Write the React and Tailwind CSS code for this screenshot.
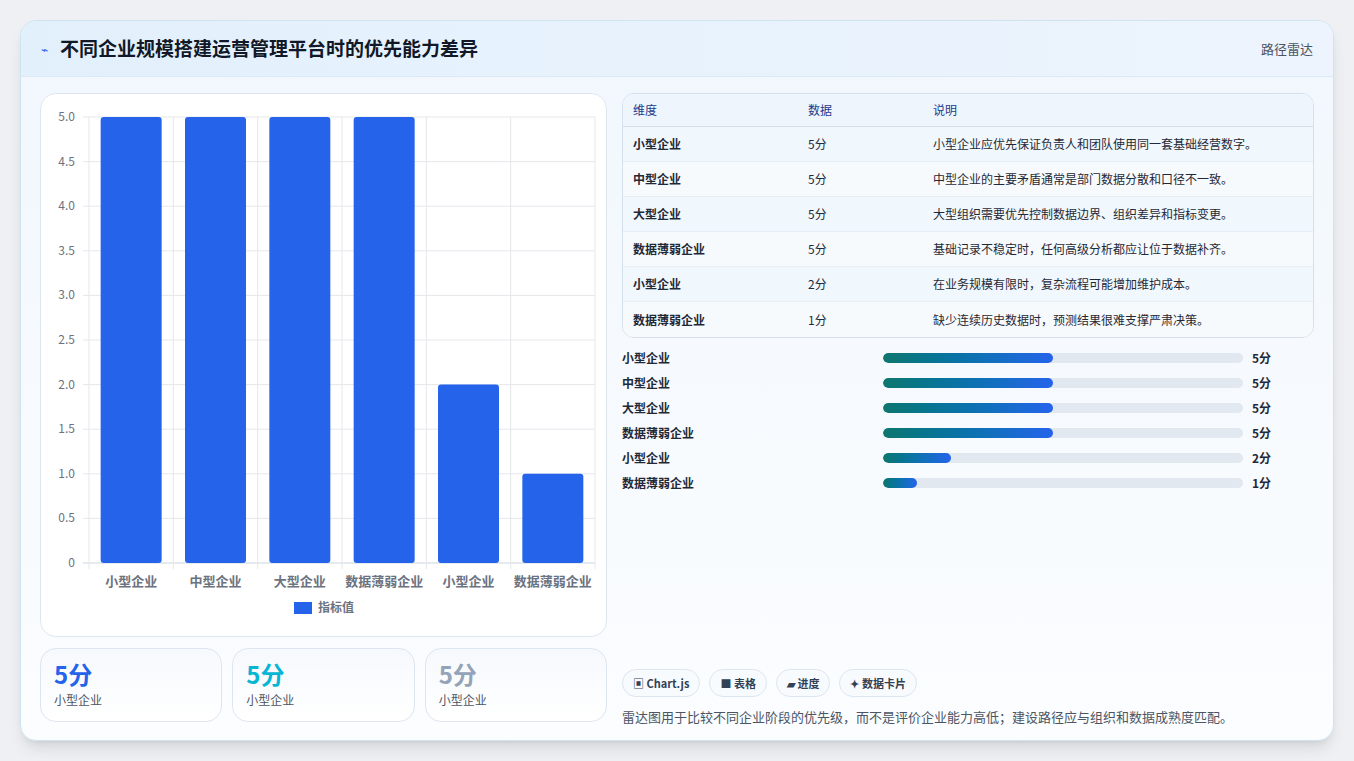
import React from 'react';

const rows = [
  ['小型企业', 5, '小型企业应优先保证负责人和团队使用同一套基础经营数字。'],
  ['中型企业', 5, '中型企业的主要矛盾通常是部门数据分散和口径不一致。'],
  ['大型企业', 5, '大型组织需要优先控制数据边界、组织差异和指标变更。'],
  ['数据薄弱企业', 5, '基础记录不稳定时，任何高级分析都应让位于数据补齐。'],
  ['小型企业', 2, '在业务规模有限时，复杂流程可能增加维护成本。'],
  ['数据薄弱企业', 1, '缺少连续历史数据时，预测结果很难支撑严肃决策。'],
];

const font = { fontFamily: '"Noto Sans CJK SC", "Noto Sans", sans-serif' };

const BarChart = () => {
  const x0 = 48, x1 = 554, yTop = 23, yBot = 469;
  const step = (x1 - x0) / 6;
  const ticks = [0, 0.5, 1, 1.5, 2, 2.5, 3, 3.5, 4, 4.5, 5];
  return (
    <svg width="566" height="543" viewBox="0 0 566 543">
      {ticks.map((t) => {
        const y = yBot - (t / 5) * (yBot - yTop);
        return (
          <g key={t}>
            <line x1={x0 - 6} x2={x1} y1={y} y2={y} stroke={t === 0 ? '#cbd5e1' : '#e5e7eb'} />
            <text x={x0 - 14} y={y + 4} fontSize="12" fill="#6b7280" textAnchor="end" style={font}>{t === 0 ? '0' : t.toFixed(1)}</text>
          </g>
        );
      })}
      {Array.from({ length: 7 }).map((_, i) => (
        <line key={i} x1={x0 + i * step} x2={x0 + i * step} y1={yTop} y2={yBot + 6} stroke="#e5e7eb" />
      ))}
      {rows.map((r, i) => {
        const h = (r[1] / 5) * (yBot - yTop);
        const cx = x0 + i * step + step / 2;
        return (
          <g key={i}>
            <rect x={cx - 30.5} y={yBot - h} width="61" height={h} rx="3" fill="#2563eb" />
            <text x={cx} y={yBot + 23} fontSize="13" fill="#6b7280" textAnchor="middle" fontWeight="600" style={font}>{r[0]}</text>
          </g>
        );
      })}
      <rect x="253" y="508" width="18" height="12" fill="#2563eb" />
      <text x="277" y="518" fontSize="12" fill="#6b7280" fontWeight="600" style={font}>指标值</text>
    </svg>
  );
};

export default function App() {
  return (
    <div className="min-h-screen bg-[#eef0f3] p-5" style={font}>
      <div className="w-[1314px] h-[721px] rounded-2xl border border-[#cfe3f1] bg-gradient-to-b from-[#f1f7fd] to-[#fbfdff] overflow-hidden shadow-lg flex flex-col">
        <div className="h-[56px] flex items-center justify-between px-5 bg-gradient-to-r from-[#e2f0fc] to-[#edf4fd] border-b border-[#dbe8f5]">
          <div className="flex items-center gap-3">
            <span className="text-[#2563eb] text-xs">⌁</span>
            <span className="text-[19px] font-bold text-[#111827]">不同企业规模搭建运营管理平台时的优先能力差异</span>
          </div>
          <span className="text-[13px] text-[#4b5563]">路径雷达</span>
        </div>
        <div className="flex gap-[15px] px-[19px] pt-4">
          <div className="w-[567px] flex flex-col gap-[11px]">
            <div className="h-[544px] bg-white rounded-2xl border border-[#dde6f0]">
              <BarChart />
            </div>
            <div className="grid grid-cols-3 gap-[10px]">
              {[['小型企业', 'text-[#2563eb]'], ['中型企业', 'text-[#06b6d4]'], ['大型企业', 'text-[#94a3b8]']].map(([l, c]) => (
                <div key={l} className="h-[74px] rounded-2xl border border-[#dde6f0] bg-gradient-to-b from-[#f6f9fd] to-white px-[13px] pt-[9px]">
                  <div className={`text-[24px] font-bold leading-8 ${c}`}>5分</div>
                  <div className="text-xs text-[#4b5563] mt-0.5">小型企业</div>
                </div>
              ))}
            </div>
          </div>
          <div className="flex-1 flex flex-col">
            <div className="rounded-xl border border-[#d5e0ec] overflow-hidden bg-white">
              <div className="grid grid-cols-[175px_125px_1fr] h-[33px] items-center px-[10px] bg-[#eef5fd] text-xs text-[#1e3a8a] border-b border-[#d5e0ec]">
                <span>维度</span><span>数据</span><span>说明</span>
              </div>
              {rows.map((r, i) => (
                <div key={i} className={`grid grid-cols-[175px_125px_1fr] h-[35px] items-center px-[10px] text-xs text-[#1f2937] border-b border-[#e5edf5] last:border-b-0 ${i % 2 ? 'bg-[#f7fafd]' : 'bg-[#f0f7fd]'}`}>
                  <span className="font-semibold">{r[0]}</span><span>{r[1]}分</span><span>{r[2]}</span>
                </div>
              ))}
            </div>
            <div className="flex flex-col gap-[9px] mt-[12px]">
              {rows.map((r, i) => (
                <div key={i} className="flex items-center h-4 text-xs font-semibold text-[#1f2937]">
                  <span className="w-[261px]">{r[0]}</span>
                  <div className="w-[360px] h-[10px] rounded-full bg-[#e2e8f0] overflow-hidden">
                    <div className="h-full rounded-full bg-gradient-to-r from-[#0f766e] to-[#2563eb]" style={{ width: `${(r[1] / 10.6) * 100}%` }} />
                  </div>
                  <span className="ml-[9px]">{r[1]}分</span>
                </div>
              ))}
            </div>
            <div className="flex-1" />
            <div className="flex gap-[9px] mt-[178px]">
              {['▣ Chart.js', '■ 表格', '▰ 进度', '✦ 数据卡片'].map((c) => (
                <span key={c} className="h-[28px] px-[10px] flex items-center rounded-full border border-[#dde6f0] bg-[#f8fbfe] text-[11px] font-semibold text-[#334155]">{c}</span>
              ))}
            </div>
            <p className="mt-[10px] text-[13px] text-[#4b5563]">雷达图用于比较不同企业阶段的优先级，而不是评价企业能力高低；建设路径应与组织和数据成熟度匹配。</p>
          </div>
        </div>
      </div>
    </div>
  );
}
